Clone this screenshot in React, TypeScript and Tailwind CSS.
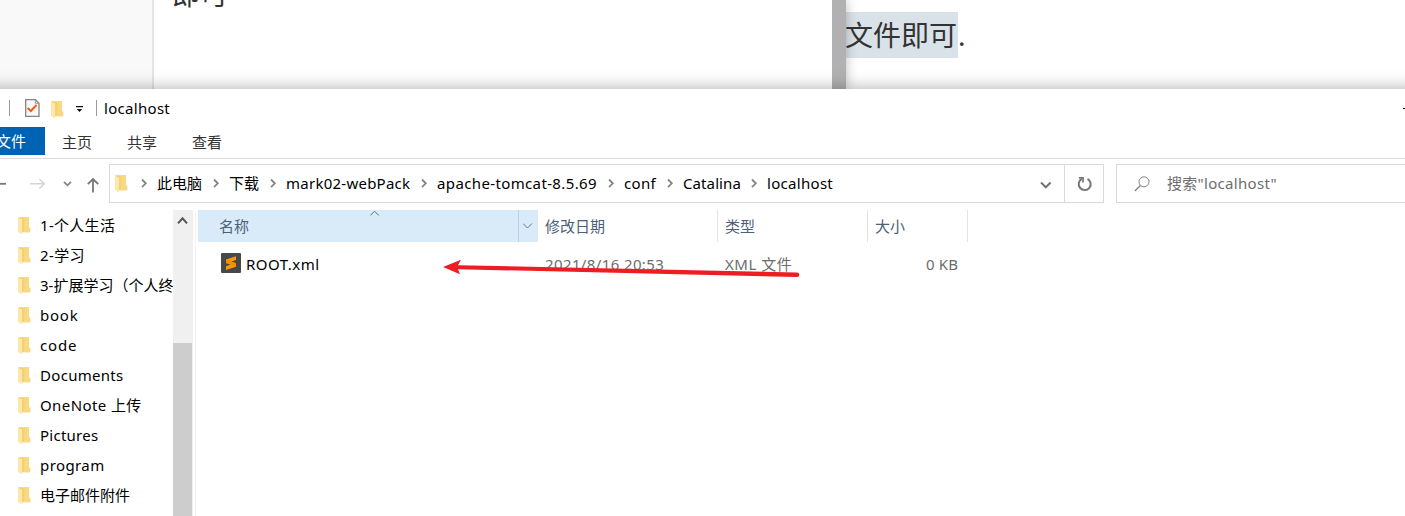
import type { ReactNode } from "react";

const FolderIcon = () => (
  <svg width="13" height="18" viewBox="0 0 13 18" className="block shrink-0">
    <path d="M3 0.2H11V10.5L12.2 11V15.2H3Z" fill="#f4d077" />
    <path d="M6.5 0.2H11V10.5L12.2 11V15.2H6Z" fill="#f8d981" />
    <path d="M0.2 0.2H3.5L4.2 2V16.8L0.2 15Z" fill="#f2cf78" />
    <path d="M0.2 0.8L4 2.4V17.2L0.2 15.2Z" fill="#ffe9a9" />
  </svg>
);

const Chevron = () => (
  <svg width="26" height="12" viewBox="0 0 26 12" className="block shrink-0">
    <path d="M11 1.5L14.8 5.3L11 9.1" fill="none" stroke="#858585" strokeWidth="1.8" />
  </svg>
);

const Crumb = ({ w, children }: { w: string; children: ReactNode }) => (
  <div className={"flex shrink-0 items-center " + w}>
    <Chevron />
    <span className="relative -top-px">{children}</span>
  </div>
);

const folders: { name: string; cls: string }[] = [
  { name: "1-个人生活", cls: "tracking-[0.3px]" },
  { name: "2-学习", cls: "tracking-[0.4px]" },
  { name: "3-扩展学习（个人终端）", cls: "tracking-[0px]" },
  { name: "book", cls: "tracking-[0.75px]" },
  { name: "code", cls: "tracking-[0.8px]" },
  { name: "Documents", cls: "tracking-[0.3px]" },
  { name: "OneNote 上传", cls: "tracking-[0.4px]" },
  { name: "Pictures", cls: "tracking-[0.25px]" },
  { name: "program", cls: "tracking-[0.4px]" },
  { name: "电子邮件附件", cls: "tracking-[0px]" },
];

const Backdrop = () => (
  <div className="flex h-[89px] text-[28px] leading-[46px] text-[#333]">
    <div className="w-[154px] shrink-0 border-r-2 border-[#e5e5e5] bg-[#f9f9f9]" />
    <div className="w-[678px] shrink-0 overflow-hidden bg-white pl-[18px]">
      <div className="-mt-[29px]">即可</div>
    </div>
    <div className="z-10 w-[14px] shrink-0 bg-[#b1b1b1] shadow-[0_0_12px_rgba(0,0,0,0.28)] [clip-path:inset(0_-16px_0_0)]" />
    <div className="grow bg-white pt-3">
      <span className="inline-block h-[46px] w-[112px] bg-[#dae2e9] -indent-px">文件即可</span>.
    </div>
  </div>
);

const TitleBar = () => (
  <div className="flex h-[38px] items-center text-black">
    <div className="ml-[9px] h-4 w-px bg-[#9b9b9b]" />
    <svg width="15" height="18" viewBox="0 0 15 18" className="relative ml-[15px]">
      <path d="M0.7 0.7H10.5L14 4.2V17.3H0.7Z" fill="#f8f8f8" stroke="#858585" strokeWidth="1.3" />
      <path d="M10.3 0.7V4.3H14" fill="none" stroke="#999" />
      <path d="M2.6 9L5.8 12L11.5 6" fill="none" stroke="#f05a1a" strokeWidth="2" />
    </svg>
    <div className="relative top-[2px] ml-[11px]">
      <FolderIcon />
    </div>
    <svg width="8" height="7" viewBox="0 0 8 7" className="relative top-[1.5px] ml-[12px]">
      <path d="M0 0H7V1.2H0ZM0.7 3H6.3L3.5 6Z" fill="#111" />
    </svg>
    <div className="ml-[12px] h-4 w-px bg-[#9b9b9b]" />
    <span className="ml-[7px] tracking-[0.3px]">localhost</span>
    <div className="ml-auto h-px w-[2px] bg-black" />
  </div>
);

const Tabs = () => (
  <div className="flex h-8 border-b border-[#dadbdc] text-[#333]">
    <div className="flex h-7 w-[45px] items-center justify-end bg-[#0063b1] pr-[19px] text-white">
      <span className="shrink-0">文件</span>
    </div>
    <div className="flex h-[31px] gap-[35px] pl-[17px] leading-[30px]">
      <span>主页</span>
      <span>共享</span>
      <span>查看</span>
    </div>
  </div>
);

const AddressRow = () => (
  <div className="flex h-[51px] items-start pt-[5px]">
    <svg width="109" height="39" viewBox="0 0 109 39" className="shrink-0" fill="none">
      <path d="M0 19.8H6" stroke="#777" strokeWidth="1.8" />
      <path d="M30 19.8H44M39.3 15L44.2 19.8L39.3 24.6" stroke="#d5d5d5" strokeWidth="1.5" />
      <path d="M64 17.8L67.5 21.3L71 17.8" stroke="#858585" strokeWidth="1.8" />
      <path d="M93 28.5V15M87.8 20.2L93 15L98.2 20.2" stroke="#777" strokeWidth="1.8" />
    </svg>
    <div className="flex h-[39px] w-[995px] shrink-0 items-center border border-[#d9d9d9] pl-[5px]">
      <div className="relative top-[0.5px]">
        <FolderIcon />
      </div>
      <div className="ml-[3px] flex text-black">
        <Crumb w="w-[72px]">此电脑</Crumb>
        <Crumb w="w-[57px]">下载</Crumb>
        <Crumb w="w-[151px]"><span className="tracking-[0.25px]">mark02-webPack</span></Crumb>
        <Crumb w="w-[187px]"><span className="tracking-[0.37px]">apache-tomcat-8.5.69</span></Crumb>
        <Crumb w="w-[59px]"><span className="tracking-[0.3px]">conf</span></Crumb>
        <Crumb w="w-[84px]"><span className="tracking-[0.1px]">Catalina</span></Crumb>
        <Crumb w="w-[110px]"><span className="tracking-[0.3px]">localhost</span></Crumb>
      </div>
      <svg width="12" height="8" viewBox="0 0 12 8" className="relative top-px mr-3 ml-auto">
        <path d="M1 1.5L5.8 6.3L10.6 1.5" fill="none" stroke="#737373" strokeWidth="2" />
      </svg>
      <div className="flex h-full w-[39px] items-center justify-center border-l border-[#d9d9d9]">
        <svg width="16" height="16" viewBox="0 0 16 16" fill="none" stroke="#777" strokeWidth="2" className="relative left-px">
          <path d="M10.5 2.8A6 6 0 1 1 4.7 2.9" />
          <path d="M1.8 1.9H6V6.4" strokeWidth="1.7" />
        </svg>
      </div>
    </div>
    <div className="ml-3 flex h-[39px] w-[400px] shrink-0 items-center border border-[#d9d9d9] text-[#6d6d6d]">
      <svg width="16" height="16" viewBox="0 0 16 16" className="ml-[17px]" fill="none" stroke="#858585">
        <circle cx="10" cy="5.8" r="5" />
        <path d="M6.4 9.5L0.8 15" strokeWidth="1.3" />
      </svg>
      <span className="relative -top-px ml-[17px] tracking-[0.3px]">搜索"localhost"</span>
    </div>
  </div>
);

const Sidebar = () => (
  <div className="flex w-[196px] shrink-0 border-r border-[#f3f3f3]">
    <div className="w-[173px] shrink-0 overflow-hidden text-black">
      {folders.map((f) => (
        <div key={f.name} className="flex h-[30px] items-center pl-[18px]">
          <div className="relative top-px">
            <FolderIcon />
          </div>
          <span className={"ml-[9px] whitespace-nowrap " + f.cls}>{f.name}</span>
        </div>
      ))}
    </div>
    <div className="flex w-5 flex-col bg-[#f0f0f0]">
      <svg width="20" height="133" viewBox="0 0 20 133" className="shrink-0">
        <path d="M5 13.3L9.5 8.3L14 13.3" fill="none" stroke="#555" strokeWidth="2" />
      </svg>
      <div className="w-[19px] grow bg-[#cdcdcd]" />
    </div>
  </div>
);

const FileList = () => (
  <div className="relative ml-[2px] grow">
    <div className="flex h-8 leading-[32px] text-[#4c607a]">
      <div className="flex w-[340px] bg-[#d9ebf9]">
        <span className="w-[172px] pl-[21px]">名称</span>
        <svg width="10" height="6" viewBox="0 0 10 6">
          <path d="M0.2 5.5L4.5 1.2L8.8 5.5" fill="none" stroke="#5c7080" />
        </svg>
        <div className="ml-auto flex w-5 items-center border-l border-[#b9d0e0] pl-1">
          <svg width="10" height="6" viewBox="0 0 10 6">
            <path d="M0 0.5L4.5 5L9 0.5" fill="none" stroke="#5c7890" />
          </svg>
        </div>
      </div>
      <div className="w-[180px] border-r border-[#e3e3e3] pl-[7px]">修改日期</div>
      <div className="w-[150px] border-r border-[#e3e3e3] pl-[7px]">类型</div>
      <div className="w-[100px] border-r border-[#e3e3e3] pl-[7px]">大小</div>
    </div>
    <div className="mt-[7px] flex h-[30px] items-center text-[#6d6d6d]">
      <div className="flex w-[340px] items-center pl-[23px]">
        <svg width="20" height="20" viewBox="0 0 20 20" className="relative -top-px">
          <rect width="20" height="20" rx="1" fill="#484848" />
          <path d="M15 3.2V7L10.2 8.6L15 10.2V13.8L5 17V13.2L9.8 11.6L5 10.1V6.4Z" fill="#ff9800" />
          <path d="M5 6.4L15 10.2V13.8L5 10.1Z" fill="#f58f00" />
        </svg>
        <span className="ml-[5px] tracking-[0.5px] text-black">ROOT.xml</span>
      </div>
      <div className="w-[180px] pl-[7px] tracking-[0.38px]">2021/8/16 20:53</div>
      <div className="w-[150px] pl-[7px] tracking-[0.5px]">XML 文件</div>
      <div className="w-[90px] text-right tracking-[0.1px]">0 KB</div>
    </div>
    <svg width="360" height="20" viewBox="0 0 360 20" className="absolute top-[48px] left-[244px]">
      <path d="M1 9L19 1.7L16 7.2L355 14.4A2.2 2.2 0 0 1 355 19L16 11.2L18 16.2Z" fill="#ee1c23" />
    </svg>
  </div>
);

export default function App() {
  return (
    <div className="h-[516px] w-full overflow-hidden bg-white font-['Noto_Sans','Noto_Sans_CJK_SC',sans-serif] text-[15px] leading-[20px] whitespace-nowrap">
      <Backdrop />
      <div className="relative z-20 -mx-5 flex h-[427px] flex-col bg-white px-5 shadow-[0_0_16px_rgba(0,0,0,0.34)]">
        <TitleBar />
        <Tabs />
        <AddressRow />
        <div className="flex grow">
          <Sidebar />
          <FileList />
        </div>
      </div>
    </div>
  );
}
